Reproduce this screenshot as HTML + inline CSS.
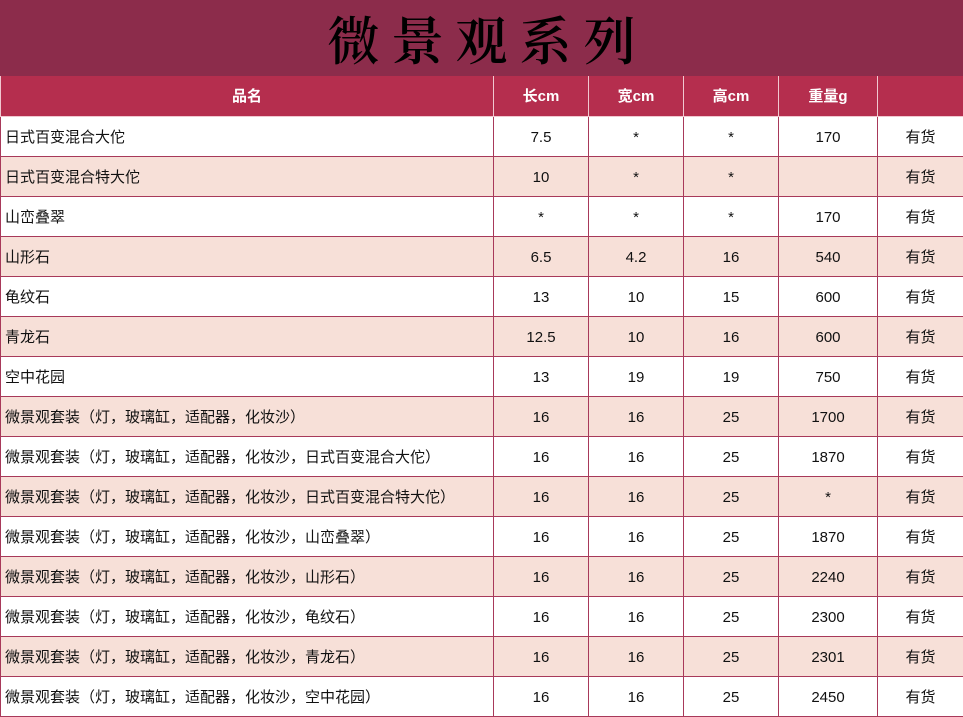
<!DOCTYPE html>
<html><head><meta charset="utf-8"><style>
*{margin:0;padding:0;box-sizing:border-box}
body{width:963px;height:717px;overflow:hidden;background:#fff;font-family:"Liberation Sans","Noto Sans CJK SC",sans-serif;font-size:15px;color:#111}
.title{position:absolute;left:0;top:0;width:963px;height:76px;background:#8c2c4b;text-align:center;line-height:76px;font-family:"Noto Serif CJK SC",serif;font-size:52px;font-weight:600;letter-spacing:12px;color:#000;padding-left:12px}
table{position:absolute;left:0;top:76px;border-collapse:collapse;table-layout:fixed;width:963px}
td{height:40px;border:1px solid #a8395a;text-align:center;padding:3px 0 0 0;font-size:15px;line-height:20px;vertical-align:middle}
td:first-child{text-align:left;padding-left:4px}
tr.h td{background:#b52e4e;color:#fff;font-weight:bold;height:40px;border-color:#f0c8d0;border-top:none}
tr.h td:first-child{text-align:center;padding-left:0}
tr:nth-child(odd):not(.h) td{background:#f7e0d8}
</style></head><body>
<div class="title">微景观系列</div>
<table>
<colgroup><col style="width:493px"><col style="width:95px"><col style="width:95px"><col style="width:95px"><col style="width:99px"><col style="width:86px"></colgroup>
<tr class="h"><td>品名</td><td>长cm</td><td>宽cm</td><td>高cm</td><td>重量g</td><td></td></tr>
<tr><td>日式百变混合大佗</td><td>7.5</td><td>*</td><td>*</td><td>170</td><td>有货</td></tr>
<tr><td>日式百变混合特大佗</td><td>10</td><td>*</td><td>*</td><td></td><td>有货</td></tr>
<tr><td>山峦叠翠</td><td>*</td><td>*</td><td>*</td><td>170</td><td>有货</td></tr>
<tr><td>山形石</td><td>6.5</td><td>4.2</td><td>16</td><td>540</td><td>有货</td></tr>
<tr><td>龟纹石</td><td>13</td><td>10</td><td>15</td><td>600</td><td>有货</td></tr>
<tr><td>青龙石</td><td>12.5</td><td>10</td><td>16</td><td>600</td><td>有货</td></tr>
<tr><td>空中花园</td><td>13</td><td>19</td><td>19</td><td>750</td><td>有货</td></tr>
<tr><td>微景观套装（灯，玻璃缸，适配器，化妆沙）</td><td>16</td><td>16</td><td>25</td><td>1700</td><td>有货</td></tr>
<tr><td>微景观套装（灯，玻璃缸，适配器，化妆沙，日式百变混合大佗）</td><td>16</td><td>16</td><td>25</td><td>1870</td><td>有货</td></tr>
<tr><td>微景观套装（灯，玻璃缸，适配器，化妆沙，日式百变混合特大佗）</td><td>16</td><td>16</td><td>25</td><td>*</td><td>有货</td></tr>
<tr><td>微景观套装（灯，玻璃缸，适配器，化妆沙，山峦叠翠）</td><td>16</td><td>16</td><td>25</td><td>1870</td><td>有货</td></tr>
<tr><td>微景观套装（灯，玻璃缸，适配器，化妆沙，山形石）</td><td>16</td><td>16</td><td>25</td><td>2240</td><td>有货</td></tr>
<tr><td>微景观套装（灯，玻璃缸，适配器，化妆沙，龟纹石）</td><td>16</td><td>16</td><td>25</td><td>2300</td><td>有货</td></tr>
<tr><td>微景观套装（灯，玻璃缸，适配器，化妆沙，青龙石）</td><td>16</td><td>16</td><td>25</td><td>2301</td><td>有货</td></tr>
<tr><td>微景观套装（灯，玻璃缸，适配器，化妆沙，空中花园）</td><td>16</td><td>16</td><td>25</td><td>2450</td><td>有货</td></tr>
</table>
</body></html>
